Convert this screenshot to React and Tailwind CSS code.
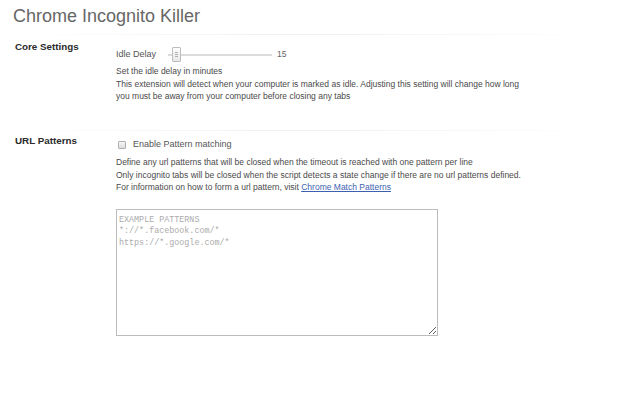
import React from 'react';

const Slider = ({ value }) => (
  <div className="flex items-center">
    <div className="relative w-[104px] h-[15px] flex items-center">
      <div className="w-full h-[2px] bg-[#dcdcdc]" />
      {/* thumb */}
      <div className="absolute left-[4px] top-0 w-[9px] h-[15px] border border-[#bdbdbd] bg-gradient-to-b from-[#fdfdfd] to-[#e8e8e8] rounded-[1px] flex flex-col items-center justify-center gap-[1px]">
        <div className="w-[3px] h-px bg-[#b0b0b0]" />
        <div className="w-[3px] h-px bg-[#b0b0b0]" />
        <div className="w-[3px] h-px bg-[#b0b0b0]" />
      </div>
    </div>
    <span className="ml-[5px] text-[8.5px] text-[#666]">{value}</span>
  </div>
);

const Divider = () => (
  <div className="mr-[27px] h-px bg-gradient-to-r from-white via-[#f0f0f0] to-white" />
);

export default function App() {
  return (
    <div
      className="w-[640px] h-[400px] bg-white text-[#4a4a4a] px-[13px] pt-[5px]"
      style={{ fontFamily: '"Liberation Sans", Arial, sans-serif' }}
    >
      <h1 className="text-[18px] leading-[22px] text-[#666] font-normal">Chrome Incognito Killer</h1>
      <div className="mt-[7px]" />
      <Divider />

      {/* Core Settings */}
      <div className="flex h-[95px]">
        <div className="w-[103px] pl-[2px] pt-[6px] text-[9.8px] leading-[12px] font-bold text-[#2a2a2a]">Core Settings</div>
        <div className="pt-[12px]">
          <div className="flex items-center h-[15px]">
            <span className="w-[52px] text-[9px] text-[#555]">Idle Delay</span>
            <Slider value={15} />
          </div>
          <div className="mt-[3px] text-[8.5px] leading-[12.5px]">
            <p>Set the idle delay in minutes</p>
            <p>This extension will detect when your computer is marked as idle. Adjusting this setting will change how long</p>
            <p>you must be away from your computer before closing any tabs</p>
          </div>
        </div>
      </div>
      <Divider />

      {/* URL Patterns */}
      <div className="flex">
        <div className="w-[103px] pl-[2px] pt-[4px] text-[9.8px] leading-[12px] font-bold text-[#2a2a2a]">URL Patterns</div>
        <div className="pt-[8px]">
          <label className="flex items-center h-[12px]">
            <span className="ml-[2px] w-[8px] h-[8px] border border-[#b0b0b0] rounded-[1px] bg-gradient-to-b from-[#f6f6f6] to-[#dedede]" />
            <span className="ml-[7px] text-[9px] text-[#555]">Enable Pattern matching</span>
          </label>
          <div className="mt-[5px] text-[8.5px] leading-[12.5px]">
            <p>Define any url patterns that will be closed when the timeout is reached with one pattern per line</p>
            <p>Only incognito tabs will be closed when the script detects a state change if there are no url patterns defined.</p>
            <p>
              For information on how to form a url pattern, visit{' '}
              <a href="#" className="text-[#3d5fb0] underline">Chrome Match Patterns</a>
            </p>
          </div>
          <textarea
            className="mt-[15px] block w-[322px] h-[127px] border border-[#bcbcbc] px-[2px] pt-[5px] pb-[3px] text-[8.4px] leading-[11.5px] placeholder:text-[#ababab] outline-none"
            style={{ fontFamily: '"Liberation Mono", "Courier New", monospace' }}
            placeholder={'EXAMPLE PATTERNS\n*://*.facebook.com/*\nhttps://*.google.com/*'}
          />
        </div>
      </div>
    </div>
  );
}
